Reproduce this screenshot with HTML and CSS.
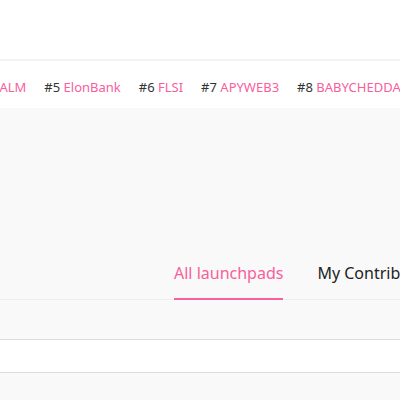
FILE: index.html
```html
<!DOCTYPE html>
<html lang="en">
<head>
    <meta charset="UTF-8">
    <meta name="viewport" content="width=device-width, initial-scale=1.0">
    <title>Launchpads</title>
    <link rel="stylesheet" href="styles.css">
</head>
<body>
    <header class="topo"></header>

    <div class="ticker">
        <div class="ticker-lista">
            <span class="item">#4 <a>CALM</a></span>
            <span class="item">#5 <a>ElonBank</a></span>
            <span class="item">#6 <a>FLSI</a></span>
            <span class="item">#7 <a>APYWEB3</a></span>
            <span class="item">#8 <a>BABYCHEDDA</a></span>
        </div>
    </div>

    <main class="conteudo">
        <nav class="abas">
            <a class="aba ativa">All launchpads</a>
            <a class="aba">My Contributions</a>
        </nav>

        <div class="faixa"></div>
    </main>
</body>
</html>
```

FILE: styles.css
```css
* {
    padding: 0;
    margin: 0;
    box-sizing: border-box;
}

body {
    background-color: #f9f9f9;
    font-family: "Noto Sans", "Open Sans", sans-serif;
    color: #333;
    overflow: hidden;
}

.topo {
    height: 61px;
    background-color: white;
    border-bottom: 2px solid #f4f4f4;
}

.ticker {
    height: 47px;
    background-color: white;
    display: flex;
    align-items: center;
    overflow: hidden;
}

.ticker-lista {
    display: flex;
    gap: 18px;
    margin-left: -28px;
    white-space: nowrap;
    font-size: 13px;
    padding-top: 5px;
}

.item a {
    color: #f7609c;
}

.conteudo {
    padding-top: 154px;
}

.abas {
    display: flex;
    gap: 34px;
    padding-left: 174px;
    border-bottom: 1px solid #efefef;
    white-space: nowrap;
}

.aba {
    font-size: 16px;
    padding-bottom: 14px;
    color: #222;
    border-bottom: 2px solid transparent;
    margin-bottom: -1px;
}

.aba.ativa {
    color: #f7609c;
    border-bottom-color: #f7609c;
}

.faixa {
    margin-top: 39px;
    height: 34px;
    background-color: white;
    border-top: 1px solid #dcdcdc;
    border-bottom: 1px solid #dcdcdc;
}
```
